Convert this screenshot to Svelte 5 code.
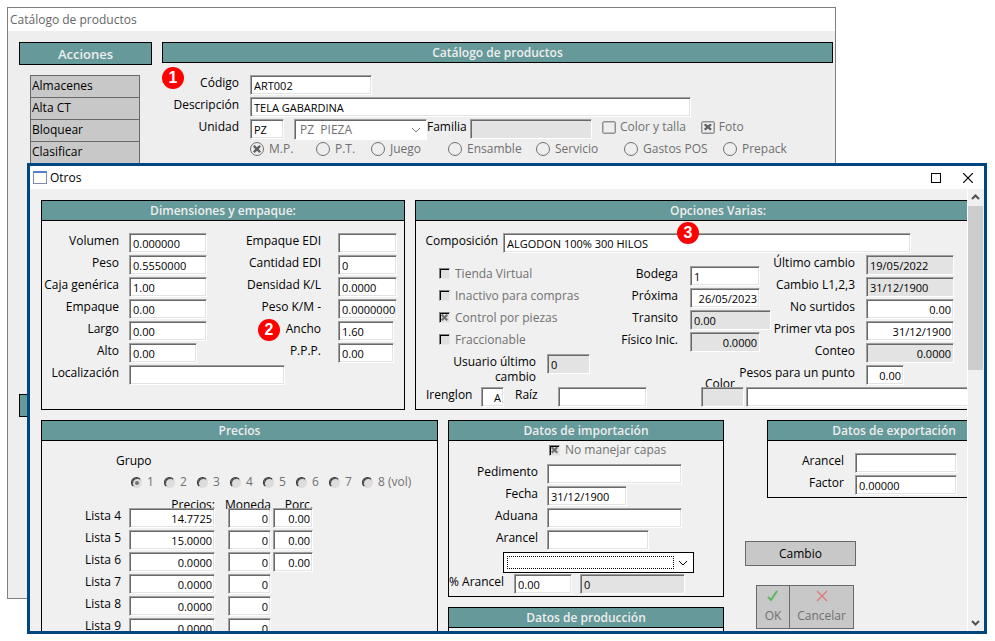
<script lang="ts">
  interface Field {
    id: string;
    label: string;
    value?: string;
    width: number;
    right?: boolean;
    readonly?: boolean;
    badge?: string;
    wrap?: boolean;
  }

  const actions = ['Almacenes', 'Alta CT', 'Bloquear', 'Clasificar'];
  const kinds = ['M.P.', 'P.T.', 'Juego', 'Ensamble', 'Servicio', 'Gastos POS', 'Prepack'];
  const groups = ['1', '2', '3', '4', '5', '6', '7', '8 (vol)'];

  const sizes: Field[] = [
    { id: 'volumen', label: 'Volumen', value: '0.000000', width: 78 },
    { id: 'peso', label: 'Peso', value: '0.5550000', width: 78 },
    { id: 'caja', label: 'Caja genérica', value: '1.00', width: 78 },
    { id: 'empaque', label: 'Empaque', value: '0.00', width: 78 },
    { id: 'largo', label: 'Largo', value: '0.00', width: 78 },
    { id: 'alto', label: 'Alto', value: '0.00', width: 68 }
  ];

  const packing: Field[] = [
    { id: 'empaque-edi', label: 'Empaque EDI', width: 59 },
    { id: 'cantidad-edi', label: 'Cantidad EDI', value: '0', width: 59 },
    { id: 'densidad', label: 'Densidad K/L', value: '0.0000', width: 59 },
    { id: 'peso-km', label: 'Peso K/M -', value: '0.0000000', width: 59 },
    { id: 'ancho', label: 'Ancho', value: '1.60', width: 56, badge: '2' },
    { id: 'ppp', label: 'P.P.P.', value: '0.00', width: 56 }
  ];

  const flags = [
    { label: 'Tienda Virtual', checked: false },
    { label: 'Inactivo para compras', checked: false },
    { label: 'Control por piezas', checked: true },
    { label: 'Fraccionable', checked: false }
  ];

  const stock: Field[] = [
    { id: 'bodega', label: 'Bodega', value: '1', width: 70 },
    { id: 'proxima', label: 'Próxima', value: '26/05/2023', width: 70, right: true },
    { id: 'transito', label: 'Transito', value: '0.00', width: 81, readonly: true },
    { id: 'fisico', label: 'Físico Inic.', value: '0.0000', width: 70, right: true, readonly: true }
  ];

  const changes: Field[] = [
    { id: 'ultimo', label: 'Último cambio', value: '19/05/2022', width: 88, readonly: true },
    { id: 'cambio-l', label: 'Cambio L1,2,3', value: '31/12/1900', width: 88, readonly: true },
    { id: 'surtidos', label: 'No surtidos', value: '0.00', width: 88, right: true },
    { id: 'primer-vta', label: 'Primer vta pos', value: '31/12/1900', width: 88, right: true },
    { id: 'conteo', label: 'Conteo', value: '0.0000', width: 88, right: true, readonly: true },
    { id: 'puntos', label: 'Pesos para un punto', value: '0.00', width: 38, right: true }
  ];

  const imports: Field[] = [
    { id: 'pedimento', label: 'Pedimento', width: 135 },
    { id: 'fecha', label: 'Fecha', value: '31/12/1900', width: 80 },
    { id: 'aduana', label: 'Aduana', width: 135 },
    { id: 'arancel', label: 'Arancel', width: 102 }
  ];

  const exportFields: Field[] = [
    { id: 'exp-arancel', label: 'Arancel', width: 102 },
    { id: 'exp-factor', label: 'Factor', value: '0.00000', width: 102 }
  ];

  const prices = [
    { list: 'Lista 4', price: '14.7725', currency: '0', percent: '0.00' },
    { list: 'Lista 5', price: '15.0000', currency: '0', percent: '0.00' },
    { list: 'Lista 6', price: '0.0000', currency: '0', percent: '0.00' },
    { list: 'Lista 7', price: '0.0000', currency: '0' },
    { list: 'Lista 8', price: '0.0000', currency: '0' },
    { list: 'Lista 9', price: '0.0000', currency: '0' }
  ];
</script>

{#snippet field(f: Field)}
  <div class="field">
    {#if f.badge}<span class="badge badge-field">{f.badge}</span>{/if}
    <label for={f.id} class:wrap={f.wrap}>{f.label}</label>
    <input
      id={f.id}
      type="text"
      value={f.value ?? ''}
      readonly={f.readonly}
      class:right={f.right}
      style="width: {f.width}px"
    />
  </div>
{/snippet}

{#snippet chevron()}
  <svg class="chevron" viewBox="0 0 10 6" width="10" height="6">
    <path d="M1 1 L5 5 L9 1" fill="none" stroke="currentColor" stroke-width="1" />
  </svg>
{/snippet}

<div class="desktop">
  <section class="window catalog">
    <header class="titlebar">Catálogo de productos</header>
    <div class="catalog-body">
      <nav class="actions">
        <h2 class="bar bar-tall">Acciones</h2>
        <div class="action-list">
          {#each actions as action}
            <button type="button">{action}</button>
          {/each}
        </div>
        <div class="bar bar-tall"></div>
      </nav>

      <div class="product">
        <h2 class="bar">Catálogo de productos</h2>
        <div class="product-form">
          <span class="badge badge-form">1</span>
          {@render field({ id: 'codigo', label: 'Código', value: 'ART002', width: 122 })}
          {@render field({ id: 'descripcion', label: 'Descripción', value: 'TELA GABARDINA', width: 441 })}
          <div class="unit-row">
            {@render field({ id: 'unidad', label: 'Unidad', value: 'PZ', width: 34 })}
            <div class="select unit-select">
              <select aria-label="Unidad" disabled>
                <option>PZ&nbsp; PIEZA</option>
              </select>
              {@render chevron()}
            </div>
            <label for="familia" class="family-label">Familia</label>
            <input id="familia" class="family" type="text" readonly />
            <label class="flat-check color-check"><input type="checkbox" disabled /> Color y talla</label>
            <label class="flat-check"><input type="checkbox" checked disabled /> Foto</label>
          </div>
          <div class="kinds">
            {#each kinds as kind, i}
              <label class="flat-radio">
                <input type="radio" name="kind" checked={i === 0} disabled />
                {kind}
              </label>
            {/each}
          </div>
        </div>
      </div>
    </div>
  </section>

  <section class="window dialog">
    <header class="titlebar">
      <svg width="14" height="13" viewBox="0 0 14 13">
        <rect x="0.5" y="0.5" width="13" height="12" fill="#fffff8" stroke="#8088b8" />
        <path d="M0 1 H14" stroke="#5580d0" stroke-width="2" />
      </svg>
      <span class="dialog-name">Otros</span>
      <button type="button" class="window-button" aria-label="Maximizar">
        <svg width="10" height="10" viewBox="0 0 10 10">
          <rect x="0.5" y="0.5" width="9" height="9" fill="none" stroke="#000" />
        </svg>
      </button>
      <button type="button" class="window-button" aria-label="Cerrar">
        <svg width="10" height="10" viewBox="0 0 10 10">
          <path d="M0 0 L10 10 M10 0 L0 10" stroke="#000" stroke-width="1.2" />
        </svg>
      </button>
    </header>

    <div class="dialog-body">
      <div class="scroll-area">
        <div class="content">
          <div class="top-row">
            <section class="panel">
              <h2 class="panel-title">Dimensiones y empaque:</h2>
              <div class="dimensions">
                <div class="size-fields">
                  {#each sizes as f}{@render field(f)}{/each}
                </div>
                <div class="packing-fields">
                  {#each packing as f}{@render field(f)}{/each}
                </div>
                <div class="size-fields location">
                  {@render field({ id: 'localizacion', label: 'Localización', width: 156 })}
                </div>
              </div>
            </section>

            <section class="panel">
              <h2 class="panel-title">Opciones Varias:</h2>
              <div class="options">
                <div class="composition">
                  <span class="badge badge-composition">3</span>
                  {@render field({ id: 'composicion', label: 'Composición', value: 'ALGODON 100% 300 HILOS', width: 408 })}
                </div>
                <div class="option-columns">
                  <div class="option-left">
                    {#each flags as flag}
                      <label class="sunken-check">
                        <input type="checkbox" checked={flag.checked} disabled />
                        {flag.label}
                      </label>
                    {/each}
                    {@render field({ id: 'usuario', label: 'Usuario último cambio', value: '0', width: 43, readonly: true, wrap: true })}
                  </div>
                  <div class="stock-fields">
                    {#each stock as f}{@render field(f)}{/each}
                  </div>
                  <div class="change-fields">
                    {#each changes as f}{@render field(f)}{/each}
                  </div>
                </div>
                <div class="option-bottom">
                  <label for="irenglon">Irenglon</label>
                  <input id="irenglon" class="right" type="text" value="A" />
                  <label for="raiz">Raíz</label>
                  <input id="raiz" type="text" />
                  <div class="color-field">
                    <label class="tucked" for="color">Color</label>
                    <input id="color" type="text" readonly />
                  </div>
                  <input type="text" aria-label="Color" />
                </div>
              </div>
            </section>
          </div>

          <div class="lower-row">
            <section class="panel">
              <h2 class="panel-title">Precios</h2>
              <div class="prices">
                <div class="group-title">Grupo</div>
                <div class="groups">
                  {#each groups as group, i}
                    <label class="sunken-radio">
                      <input type="radio" name="group" checked={i === 0} disabled />
                      {group}
                    </label>
                  {/each}
                </div>
                <table>
                  <thead>
                    <tr>
                      <td class="list"></td>
                      <th class="price"><div class="tucked">Precios:</div></th>
                      <th class="currency"><div class="tucked">Moneda</div></th>
                      <th class="percent"><div class="tucked">Porc.</div></th>
                    </tr>
                  </thead>
                  <tbody>
                    {#each prices as row}
                      <tr>
                        <th scope="row">{row.list}</th>
                        <td class="price"><input class="right" type="text" value={row.price} aria-label={row.list} /></td>
                        <td class="currency"><input class="right" type="text" value={row.currency} aria-label="Moneda" /></td>
                        <td class="percent">
                          {#if row.percent}
                            <input class="right" type="text" value={row.percent} aria-label="Porc." />
                          {/if}
                        </td>
                      </tr>
                    {/each}
                  </tbody>
                </table>
              </div>
            </section>

            <div class="stack">
              <section class="panel">
                <h2 class="panel-title">Datos de importación</h2>
                <div class="imports">
                  <label class="sunken-check layers">
                    <input type="checkbox" checked disabled />
                    No manejar capas
                  </label>
                  {#each imports as f}{@render field(f)}{/each}
                  <div class="select tariff-select">
                    <select aria-label="Arancel">
                      <option></option>
                    </select>
                    {@render chevron()}
                  </div>
                  <div class="tariff-row">
                    <label for="pct-arancel">% Arancel</label>
                    <input id="pct-arancel" type="text" value="0.00" />
                    <input type="text" value="0" aria-label="% Arancel" readonly />
                  </div>
                </div>
              </section>
              <section class="panel">
                <h2 class="panel-title">Datos de producción</h2>
                <div class="production"></div>
              </section>
            </div>

            <div class="side">
              <section class="panel export-panel">
                <h2 class="panel-title">Datos de exportación</h2>
                <div class="exports">
                  {#each exportFields as f}{@render field(f)}{/each}
                </div>
              </section>
              <button type="button" class="change-button">Cambio</button>
              <div class="confirm">
                <button type="button" disabled>
                  <svg width="12" height="12" viewBox="0 0 12 12">
                    <path d="M1 7 L4 10 L10 1" fill="none" stroke="#5cb85c" stroke-width="2" />
                  </svg>
                  OK
                </button>
                <button type="button" disabled>
                  <svg width="12" height="12" viewBox="0 0 12 12">
                    <path d="M1 1 L11 11 M11 1 L1 11" stroke="#dc7878" stroke-width="1.3" />
                  </svg>
                  Cancelar
                </button>
              </div>
            </div>
          </div>
        </div>
      </div>

      <div class="scrollbar">
        <svg width="17" height="17" viewBox="0 0 17 17">
          <path d="M4 10 L7.5 6.5 L11 10" fill="none" stroke="#505050" stroke-width="2" />
        </svg>
        <div class="thumb"></div>
        <svg width="17" height="17" viewBox="0 0 17 17">
          <path d="M4 7 L7.5 10.5 L11 7" fill="none" stroke="#505050" stroke-width="2" />
        </svg>
      </div>
    </div>
  </section>
</div>

<style>
  :global(body) {
    background: #fff;
  }

  .desktop {
    position: relative;
    height: 100vh;
    overflow: hidden;
    font-family: "Open Sans", "Noto Sans", sans-serif;
    font-size: 12px;
    line-height: 16px;
    color: #000;
  }

  .desktop * {
    box-sizing: border-box;
  }

  /* windows */
  .window {
    position: absolute;
    display: flex;
    flex-direction: column;
    overflow: hidden;
    background: #f0f0f0;
  }

  .catalog {
    inset: 7px 159px 42px 7px;
    border: 1px solid #808080;
    background: #eee;
  }

  .dialog {
    inset: 163px 8px 7px 27px;
    border: 3px solid #004680;
  }

  .titlebar {
    display: flex;
    align-items: center;
    flex: none;
    height: 23px;
    padding: 0 2px;
    background: #fff;
    color: #666;
  }

  .dialog .titlebar {
    padding: 0 0 0 3px;
    color: #000;
  }

  .dialog-name {
    flex: 1;
    padding-left: 3px;
  }

  .window-button {
    display: flex;
    align-items: center;
    justify-content: center;
    width: 32px;
    height: 23px;
    padding: 0;
    border: 0;
    background: none;
  }

  /* shared controls */
  h2 {
    margin: 0;
    font-size: 12px;
    font-weight: 600;
    text-align: center;
  }

  .bar {
    height: 21px;
    border: 1px solid #000;
    background: #699;
    color: #eee;
    line-height: 20px;
  }

  .bar-tall {
    height: 23px;
    font-size: 13px;
    line-height: 22px;
  }

  label {
    white-space: nowrap;
  }

  input[type='text'] {
    position: relative;
    display: block;
    height: 20px;
    padding: 1px 0 0 3px;
    border: 1px solid;
    border-color: #a0a0a0 #fff #fff #a0a0a0;
    border-radius: 0;
    background: #fff;
    box-shadow: inset 1px 1px #696969, inset -1px -1px #e3e3e3;
    font: 11px "Open Sans", "Noto Sans", sans-serif;
    color: #000;
    outline: 0;
  }

  input[type='text']:read-only {
    background: #e3e3e3;
  }

  input[type='text'].right {
    padding: 1px 2px 0 1px;
    text-align: right;
  }

  .field {
    position: relative;
    display: grid;
    grid-template-columns: var(--label-width) auto;
    column-gap: var(--label-gap, 11px);
    justify-content: start;
    align-items: start;
    height: 22px;
  }

  .field label {
    justify-self: end;
  }

  .field .wrap {
    width: 88px;
    white-space: normal;
    text-align: right;
    line-height: 15px;
  }

  .badge {
    position: absolute;
    z-index: 1;
    width: 22px;
    height: 22px;
    border-radius: 50%;
    background: #f00;
    color: #fff;
    font: 700 16px/22px "Liberation Sans", Arial, sans-serif;
    text-align: center;
  }

  .badge-form {
    top: -8px;
    left: 0;
  }

  .badge-field {
    top: -2px;
    left: 40px;
  }

  .badge-composition {
    top: -11px;
    left: 261px;
  }

  .select {
    position: relative;
  }

  select {
    display: block;
    width: 100%;
    height: 21px;
    padding: 0 5px;
    border-radius: 0;
    appearance: none;
    background: #fff;
    font: 12px "Open Sans", "Noto Sans", sans-serif;
    color: #000;
    outline: 0;
  }

  .chevron {
    position: absolute;
    top: 8px;
    right: 6px;
    pointer-events: none;
  }

  input[type='checkbox'],
  input[type='radio'] {
    position: relative;
    flex: none;
    margin: 0;
    appearance: none;
  }

  input[type='checkbox']:checked::before,
  .flat-radio input:checked::before {
    position: absolute;
    inset: 2px;
    background: #606060;
    clip-path: polygon(0 20%, 20% 0, 50% 28%, 80% 0, 100% 20%, 72% 50%, 100% 80%, 80% 100%, 50% 72%, 20% 100%, 0 80%, 28% 50%);
    content: '';
  }

  .flat-check,
  .flat-radio,
  .sunken-check,
  .sunken-radio {
    display: flex;
    align-items: center;
    color: #707070;
  }

  .flat-check {
    gap: 4px;
    height: 16px;
  }

  .flat-check input {
    width: 14px;
    height: 13px;
    border: 1px solid #909090;
    border-radius: 2px;
    background: #eee;
    box-shadow: inset 0 0 0 1px #c0c0c0;
  }

  .flat-radio {
    gap: 5px;
  }

  .flat-radio input {
    width: 14px;
    height: 14px;
    border: 1px solid #707070;
    border-radius: 50%;
  }

  .sunken-check {
    gap: 5px;
    height: 22px;
    padding-bottom: 7px;
  }

  .sunken-check input {
    width: 11px;
    height: 11px;
    border: 1px solid;
    border-color: #808080 #e8e8e8 #e8e8e8 #808080;
    background: #e0e0e0;
    box-shadow: inset 1px 1px #000;
  }

  .sunken-check input:checked::before {
    inset: 1px;
    background: #707070;
  }

  .sunken-radio {
    gap: 5px;
  }

  .sunken-radio input {
    width: 11px;
    height: 11px;
    border: 1px solid;
    border-color: #303030 transparent transparent #303030;
    border-radius: 50%;
    background: #ddd;
    box-shadow: inset 1px 1px #505050;
  }

  .sunken-radio input:checked::before {
    position: absolute;
    inset: 3px 2px 2px 3px;
    border-radius: 50%;
    background: #707070;
    content: '';
  }

  /* captions that run in under the box below them */
  .tucked {
    height: 11px;
  }

  /* catalog window */
  .catalog-body {
    display: grid;
    grid-template-columns: 133px 1fr;
    gap: 10px;
    padding: 11px 2px 0 11px;
  }

  .action-list {
    display: flex;
    flex-direction: column;
    height: 319px;
    margin: 10px 12px 0 11px;
  }

  .action-list button {
    flex: none;
    height: 23px;
    margin-bottom: -1px;
    padding: 0 1px 1px;
    border: 1px solid #696969;
    background: #c8c8c8;
    font: inherit;
    color: #000;
    text-align: left;
  }

  .product-form {
    --label-width: 77px;
    position: relative;
    margin-top: 12px;
  }

  .unit-row {
    display: flex;
    align-items: flex-start;
  }

  .unit-select {
    flex: none;
    width: 133px;
    margin-left: 10px;
    color: #808080;
  }

  .unit-select select {
    border: 1px solid;
    border-color: #a0a0a0 #fff #fff #a0a0a0;
    box-shadow: inset 1px 1px #696969;
    color: #707070;
    opacity: 1;
  }

  .family-label {
    width: 43px;
  }

  .family {
    width: 122px;
  }

  .color-check {
    margin: 0 15px 0 10px;
  }

  .kinds {
    display: grid;
    grid-template-columns: 66px 55px 77px 88px 88px 99px auto;
    padding-left: 88px;
  }

  /* dialog */
  .dialog-body {
    display: flex;
    flex: 1;
    min-height: 0;
  }

  .scroll-area {
    flex: 1;
    min-width: 0;
    overflow: hidden;
  }

  .content {
    display: flex;
    flex-direction: column;
    gap: 10px;
    min-width: 1002px;
    padding: 11px;
  }

  .scrollbar {
    display: flex;
    flex-direction: column;
    flex: none;
    width: 17px;
    border-left: 1px solid #fff;
  }

  .scrollbar svg {
    flex: none;
  }

  .thumb {
    height: 37%;
    margin-right: 1px;
    background: #cdcdcd;
  }

  .scrollbar svg:last-child {
    margin-top: auto;
  }

  .top-row {
    display: grid;
    grid-template-columns: 364px 1fr;
    gap: 10px;
  }

  .lower-row {
    display: grid;
    grid-template-columns: 397px 276px 1fr;
    gap: 10px;
  }

  .panel {
    border: 1px solid #000;
  }

  .panel-title {
    height: 20px;
    border-bottom: 1px solid #000;
    background: #699;
    color: #eee;
    line-height: 19px;
  }

  .dimensions {
    display: grid;
    grid-template-columns: 176px auto;
    justify-content: start;
    padding: 12px 0 22px;
  }

  .size-fields {
    --label-width: 77px;
    --label-gap: 10px;
  }

  .packing-fields {
    --label-width: 103px;
    --label-gap: 17px;
  }

  .location {
    grid-column: 1 / -1;
  }

  .options {
    padding: 12px 5px 2px 0;
  }

  .composition {
    --label-width: 82px;
    --label-gap: 5px;
    position: relative;
  }

  .option-columns {
    display: grid;
    grid-template-columns: 174px 150px 1fr;
  }

  .option-left {
    --label-width: 120px;
    padding-top: 11px;
  }

  .option-left .sunken-check {
    padding-left: 23px;
  }

  .stock-fields {
    --label-width: 88px;
    --label-gap: 12px;
    padding-top: 11px;
  }

  .change-fields {
    --label-width: 115px;
  }

  .option-bottom {
    display: grid;
    grid-template-columns: 55px 34px 43px 143px 43px 1fr;
    align-items: start;
    padding-left: 10px;
  }

  .option-bottom input {
    width: 100%;
  }

  #irenglon {
    width: 23px;
  }

  #raiz {
    width: 89px;
  }

  .color-field {
    margin-top: -11px;
  }

  .color-field label {
    display: block;
    padding-left: 4px;
  }

  .option-bottom > input:last-child {
    width: calc(100% - 2px);
    margin-left: 2px;
  }

  .prices {
    padding: 12px 0 0 40px;
  }

  .group-title {
    padding-left: 34px;
  }

  .groups {
    display: grid;
    grid-template-columns: repeat(8, 33px);
    margin: 5px 0 7px;
    padding-left: 49px;
  }

  table {
    table-layout: fixed;
    width: 231px;
    border-collapse: collapse;
  }

  th,
  td {
    padding: 0;
    font-weight: 400;
    text-align: right;
    vertical-align: top;
  }

  tbody tr {
    height: 22px;
  }

  td input {
    width: 100%;
  }

  .list {
    width: 39px;
  }

  .price {
    width: 94px;
    padding-left: 8px;
  }

  .currency {
    width: 56px;
    padding-left: 13px;
  }

  thead .currency {
    padding-left: 0;
  }

  .percent {
    width: 42px;
    padding-left: 2px;
  }

  .stack {
    display: flex;
    flex-direction: column;
    gap: 10px;
  }

  .imports {
    --label-width: 89px;
    --label-gap: 9px;
    padding-bottom: 2px;
  }

  .imports .layers {
    height: 23px;
    padding: 0 0 5px 100px;
  }

  .tariff-select {
    width: 191px;
    margin-left: 54px;
  }

  .tariff-select select {
    border: 1px solid #000;
  }

  .tariff-select::before {
    position: absolute;
    inset: 4px 20px 4px 4px;
    border: 1px dotted #000;
    content: '';
    pointer-events: none;
  }

  .tariff-row {
    display: grid;
    grid-template-columns: 57px 58px 105px;
    gap: 8px;
    align-items: start;
    margin-top: 1px;
  }

  .tariff-row input {
    width: 100%;
  }

  .production {
    height: 40px;
  }

  .side {
    display: flex;
    flex-direction: column;
    align-items: flex-start;
  }

  .export-panel {
    align-self: stretch;
    margin-left: 33px;
  }

  .exports {
    --label-width: 76px;
    padding-top: 12px;
  }

  .side button {
    border: 1px solid #696969;
    background: #c8c8c8;
    font: inherit;
    color: #000;
  }

  .side .change-button {
    width: 111px;
    height: 25px;
    margin: 43px 0 19px 11px;
  }

  .confirm {
    display: grid;
    grid-template-columns: 34px 64px;
    margin-left: 22px;
  }

  .confirm button {
    display: flex;
    flex-direction: column;
    align-items: center;
    gap: 6px;
    height: 44px;
    padding: 4px 0 0;
    color: #707070;
  }

  .confirm button + button {
    margin-left: -1px;
  }
</style>
